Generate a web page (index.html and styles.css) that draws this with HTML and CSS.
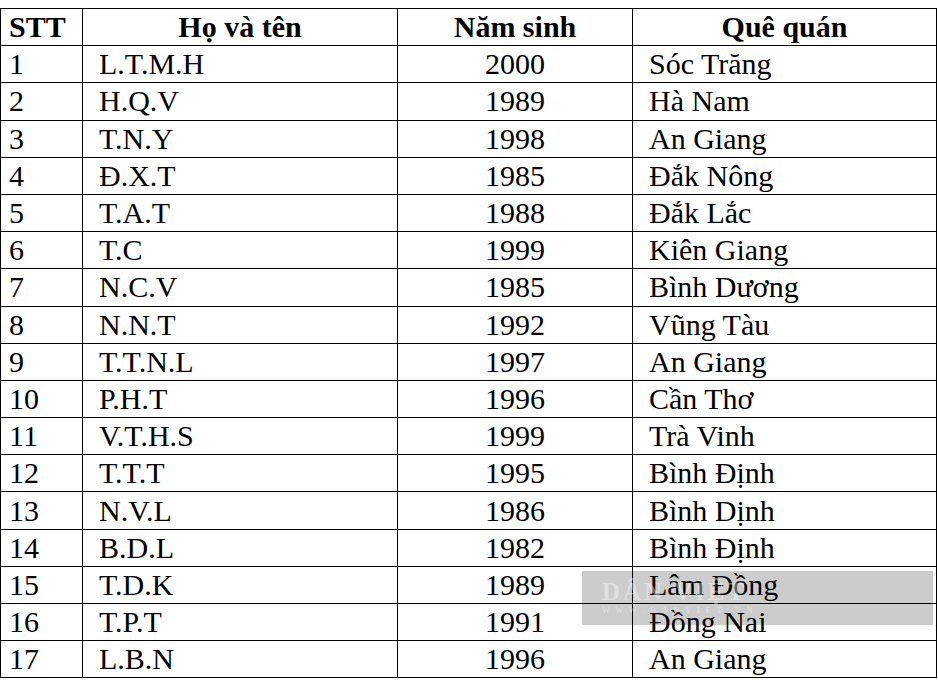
FILE: index.html
```html
<!DOCTYPE html>
<html lang="vi">
<head>
<meta charset="utf-8">
<title>Danh sách</title>
<link rel="stylesheet" href="styles.css">
</head>
<body>
<div class="page">
<table class="list">
<colgroup>
<col class="c-stt"><col class="c-name"><col class="c-year"><col class="c-home">
</colgroup>
<thead>
<tr><th class="stt">STT</th><th>Họ và tên</th><th>Năm sinh</th><th>Quê quán</th></tr>
</thead>
<tbody>
<tr><td class="stt">1</td><td class="name">L.T.M.H</td><td class="year">2000</td><td class="home">Sóc Trăng</td></tr>
<tr><td class="stt">2</td><td class="name">H.Q.V</td><td class="year">1989</td><td class="home">Hà Nam</td></tr>
<tr><td class="stt">3</td><td class="name">T.N.Y</td><td class="year">1998</td><td class="home">An Giang</td></tr>
<tr><td class="stt">4</td><td class="name">Đ.X.T</td><td class="year">1985</td><td class="home">Đắk Nông</td></tr>
<tr><td class="stt">5</td><td class="name">T.A.T</td><td class="year">1988</td><td class="home">Đắk Lắc</td></tr>
<tr><td class="stt">6</td><td class="name">T.C</td><td class="year">1999</td><td class="home">Kiên Giang</td></tr>
<tr><td class="stt">7</td><td class="name">N.C.V</td><td class="year">1985</td><td class="home">Bình Dương</td></tr>
<tr><td class="stt">8</td><td class="name">N.N.T</td><td class="year">1992</td><td class="home">Vũng Tàu</td></tr>
<tr><td class="stt">9</td><td class="name">T.T.N.L</td><td class="year">1997</td><td class="home">An Giang</td></tr>
<tr><td class="stt">10</td><td class="name">P.H.T</td><td class="year">1996</td><td class="home">Cần Thơ</td></tr>
<tr><td class="stt">11</td><td class="name">V.T.H.S</td><td class="year">1999</td><td class="home">Trà Vinh</td></tr>
<tr><td class="stt">12</td><td class="name">T.T.T</td><td class="year">1995</td><td class="home">Bình Định</td></tr>
<tr><td class="stt">13</td><td class="name">N.V.L</td><td class="year">1986</td><td class="home">Bình Dịnh</td></tr>
<tr><td class="stt">14</td><td class="name">B.D.L</td><td class="year">1982</td><td class="home">Bình Định</td></tr>
<tr><td class="stt">15</td><td class="name">T.D.K</td><td class="year">1989</td><td class="home">Lâm Đồng</td></tr>
<tr><td class="stt">16</td><td class="name">T.P.T</td><td class="year">1991</td><td class="home">Đồng Nai</td></tr>
<tr><td class="stt">17</td><td class="name">L.B.N</td><td class="year">1996</td><td class="home">An Giang</td></tr>
</tbody>
</table>
<div class="watermark">
<span class="wm-logo">DÂN VIỆT</span>
<span class="wm-url">WWW.DANVIET.VN</span>
</div>
</div>
</body>
</html>
```
FILE: styles.css
```css
html, body {
  margin: 0;
  padding: 0;
  background: #fff;
}
.page {
  position: relative;
  padding-top: 8px;
  width: 938px;
  height: 673px;
  overflow: hidden;
}
.list {
  border-collapse: collapse;
  table-layout: fixed;
  width: 936px;
  font-family: "Liberation Serif", "Times New Roman", serif;
  font-size: 30px;
  color: #000;
}
.c-stt { width: 82px; }
.c-name { width: 315px; }
.c-year { width: 235px; }
.c-home { width: 304px; }
.list th, .list td {
  border: 1px solid #000;
  height: 37.2px;
  padding: 0;
  line-height: normal;
  vertical-align: middle;
  white-space: nowrap;
  box-sizing: border-box;
}
.list th {
  font-weight: bold;
  text-align: center;
}
.list .stt {
  text-align: left;
  padding-left: 8px;
}
.list .name, .list .home {
  text-align: left;
  padding-left: 16px;
}
.list .year {
  text-align: center;
}
.watermark {
  position: absolute;
  left: 582px;
  top: 571px;
  width: 351px;
  height: 54px;
  background: rgba(0, 0, 0, 0.2);
  display: flex;
  flex-direction: column;
  padding: 9px 0 0 20px;
  box-sizing: border-box;
  font-family: "Liberation Serif", serif;
  color: rgba(255, 255, 255, 0.4);
}
.wm-logo {
  font-size: 25px;
  font-weight: bold;
  letter-spacing: 3px;
  line-height: 24px;
}
.wm-url {
  font-size: 8px;
  letter-spacing: 6px;
  line-height: 14px;
}
```
